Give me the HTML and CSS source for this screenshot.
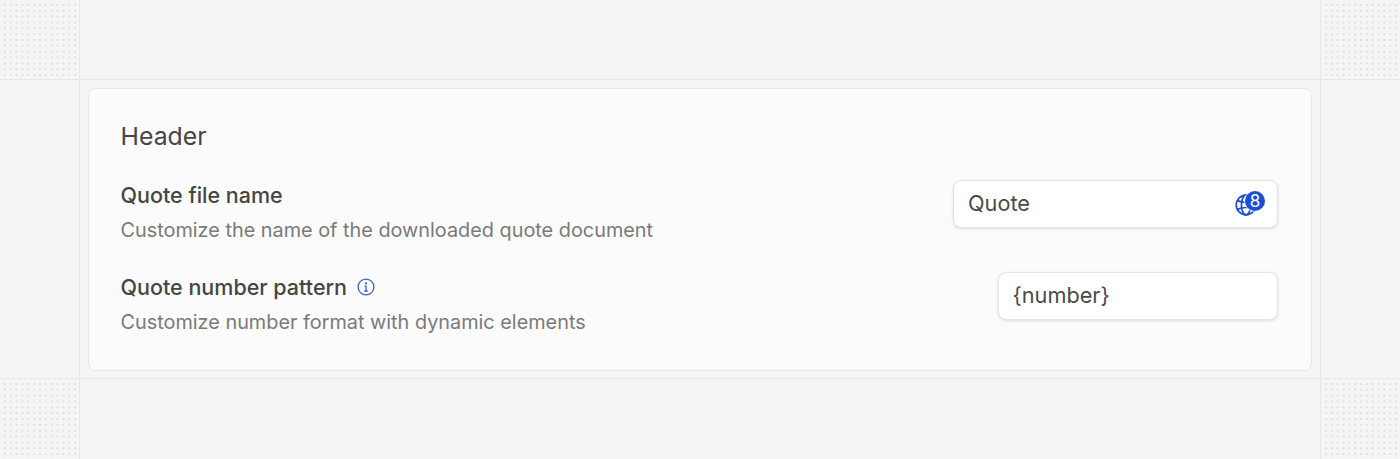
FILE: index.html
```html
<!DOCTYPE html>
<html lang="en">
<head>
    <meta charset="UTF-8" />
    <meta name="viewport" content="width=device-width, initial-scale=1" />
    <title>Quote settings</title>
    <link rel="stylesheet" href="styles.css">
</head>
<body>
    <div class="frame">
        <div class="corner corner-top-left"></div>
        <div class="edge-top"></div>
        <div class="corner corner-top-right"></div>

        <div class="edge-left"></div>
        <main class="center">
            <section class="card">
                <h2 class="card-title">Header</h2>

                <div class="setting setting-first">
                    <div class="setting-text">
                        <div class="setting-label">Quote file name</div>
                        <div class="setting-desc">Customize the name of the downloaded quote document</div>
                    </div>
                    <div class="field field-wide">
                        <span class="field-value">Quote</span>
                        <span class="locale">
                            <svg class="locale-globe" width="22" height="22" viewBox="0 0 22 22" fill="none" stroke="#1d4ed8" stroke-width="1.7">
                                <circle cx="11" cy="11" r="9.8" />
                                <ellipse cx="11" cy="11" rx="4.6" ry="9.8" />
                                <path d="M2.4 6.6c5 2.2 12.2 2.2 17.2 0M2.4 15.4c5-2.2 12.2-2.2 17.2 0" />
                            </svg>
                            <span class="locale-count">8</span>
                        </span>
                    </div>
                </div>

                <div class="setting">
                    <div class="setting-text">
                        <div class="setting-label">
                            Quote number pattern
                            <svg class="info-icon" width="18" height="18" viewBox="0 0 18 18" fill="none" stroke="#3a5fd0" stroke-width="1.3">
                                <circle cx="9" cy="9" r="7.9" />
                                <path d="M7.5 8.2H9v4.8M7.2 13h3.6" />
                                <circle cx="8.9" cy="5.4" r="0.5" fill="#3a5fd0" />
                            </svg>
                        </div>
                        <div class="setting-desc">Customize number format with dynamic elements</div>
                    </div>
                    <div class="field field-narrow">
                        <span class="field-value">{number}</span>
                    </div>
                </div>
            </section>
        </main>
        <div class="edge-right"></div>

        <div class="corner corner-bottom-left"></div>
        <div class="edge-bottom"></div>
        <div class="corner corner-bottom-right"></div>
    </div>
</body>
</html>
```

FILE: styles.css
```css
* {
    box-sizing: border-box;
}
html, body {
    margin: 0;
    height: 100%;
}
body {
    font-family: Inter, "Liberation Sans", sans-serif;
    background-color: #f5f5f5;
    color: #454545;
    overflow: hidden;
}
.frame {
    display: grid;
    grid-template-columns: 80px 1fr 80px;
    grid-template-rows: 80px 299px 80px;
    height: 459px;
}
.corner {
    background-image: radial-gradient(circle at center, #e0e0e0 0, #e0e0e0 0.8px, transparent 1.3px);
    background-size: 5.85px 5.85px;
    background-position: 2px 2px;
}
.corner-top-left {
    border-bottom: 1px solid #e7e7e7;
    border-right: 1px solid #e7e7e7;
}
.corner-top-right {
    border-bottom: 1px solid #e7e7e7;
    border-left: 1px solid #e7e7e7;
}
.corner-bottom-left {
    border-right: 1px solid #e7e7e7;
}
.corner-bottom-right {
    border-left: 1px solid #e7e7e7;
}
.edge-top {
    border-bottom: 1px solid #e7e7e7;
}
.edge-left {
    border-bottom: 1px solid #e7e7e7;
    border-right: 1px solid #e7e7e7;
}
.edge-right {
    border-bottom: 1px solid #e7e7e7;
    border-left: 1px solid #e7e7e7;
}
.center {
    padding: 8px 8px 7px;
    border-bottom: 1px solid #e7e7e7;
}
.card {
    height: 283px;
    padding: 32px 33px 0 31.5px;
    background-color: #fbfbfb;
    border: 1px solid #e8e8e8;
    border-radius: 8px;
}
.card-title {
    margin: 0;
    font-size: 24.8px;
    line-height: 30px;
    font-weight: 400;
    color: #454545;
}
.setting {
    display: flex;
    justify-content: space-between;
    align-items: flex-start;
    margin-top: 27px;
}
.setting-first {
    margin-top: 29px;
}
.setting-label {
    display: flex;
    align-items: center;
    gap: 10px;
    font-size: 21.5px;
    line-height: 30px;
    font-weight: 500;
    color: #454545;
}
.setting-desc {
    margin-top: 5px;
    font-size: 19.85px;
    line-height: 30px;
    color: #7a7a7a;
}
.field {
    display: flex;
    align-items: center;
    justify-content: space-between;
    height: 48px;
    padding: 0 12px 2px 14px;
    background-color: #fff;
    border: 1px solid #e4e4e4;
    border-radius: 8px;
    box-shadow: 0 1px 3px rgba(0,0,0,0.12);
    font-size: 21.7px;
    color: #4a4a4a;
}
.field-wide {
    width: 325px;
}
.field-narrow {
    width: 280px;
    padding-left: 13.5px;
}
.locale {
    position: relative;
    display: block;
    width: 30px;
    height: 24px;
    top: 1px;
}
.locale-globe {
    position: absolute;
    left: 0;
    top: 1.5px;
}
.locale-count {
    position: absolute;
    left: 10px;
    top: -1.5px;
    width: 20px;
    height: 20px;
    border-radius: 50%;
    background-color: #1d4ed8;
    box-shadow: 0 0 0 1px rgba(255,255,255,0.6);
    color: #fff;
    font-size: 17px;
    font-weight: 400;
    line-height: 20px;
    text-align: center;
}
```
